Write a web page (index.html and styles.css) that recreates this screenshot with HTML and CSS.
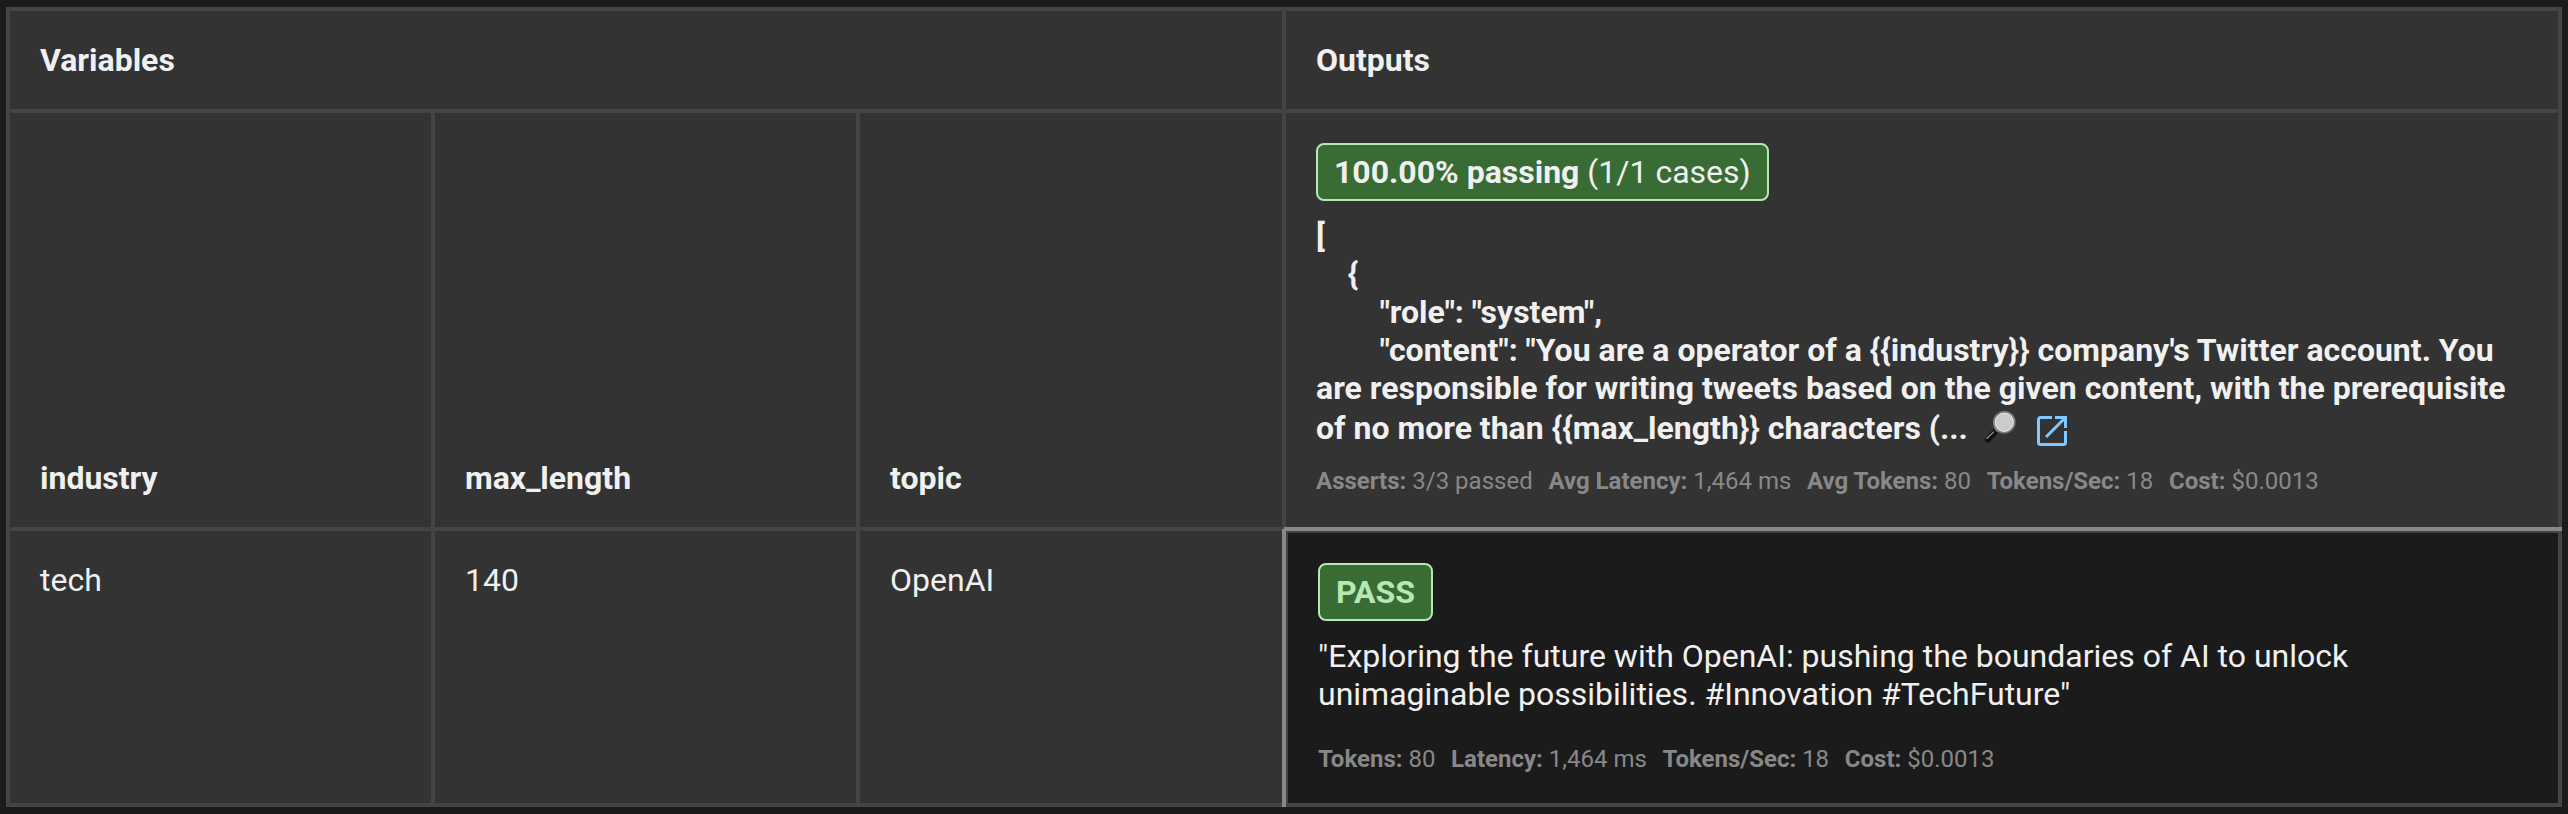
FILE: index.html
```
<!DOCTYPE html>
<html lang="en">
<head>
<meta charset="utf-8">
<title>Evaluation results</title>
<link rel="stylesheet" href="styles.css">
</head>
<body>
<main class="results">
  <div class="cell group-heading variables-heading">Variables</div>
  <div class="cell group-heading">Outputs</div>
  <div class="cell column-heading">industry</div>
  <div class="cell column-heading">max_length</div>
  <div class="cell column-heading">topic</div>
  <div class="cell prompt-heading">
    <div class="badge"><strong>100.00% passing</strong> (1/1 cases)</div>
    <div class="prompt">[
    {
        "role": "system",
        "content": "You are a operator of a {{industry}} company's Twitter account. You
are responsible for writing tweets based on the given content, with the prerequisite<div class="prompt-end">of no more than {{max_length}} characters (...<svg class="lens" viewBox="0 0 32 34"><defs><linearGradient id="rim" x1="0" y1="0" x2="1" y2="1"><stop offset="0" stop-color="#777"/><stop offset=".5" stop-color="#8a8a8a"/><stop offset="1" stop-color="#5c626b"/></linearGradient></defs><path d="M14 20 10 24" stroke="#999" stroke-width="3"/><path d="M10 24 4 30.500" stroke="#0c0f13" stroke-width="6" stroke-linecap="round"/><path d="M9.500 23 2.800 29.500" stroke="#7b858f" stroke-width="1.600" stroke-linecap="round"/><circle cx="20.300" cy="13.300" r="10.400" fill="#cbcbcb" stroke="url(#rim)" stroke-width="2"/><circle cx="20.300" cy="13.300" r="9.100" fill="none" stroke="#e8e8e8" stroke-width="1"/></svg><svg class="open" viewBox="0 0 30 30"><path d="M15 1.500H3.500a2 2 0 0 0-2 2v23a2 2 0 0 0 2 2h23a2 2 0 0 0 2-2V15M18 1.500h10.500V12M28 2 9 21" fill="none" stroke="#80c8ff" stroke-width="3"/></svg></div></div>
    <div class="stats"><span><b>Asserts:</b> 3/3 passed</span><span><b>Avg Latency:</b> 1,464 ms</span><span><b>Avg Tokens:</b> 80</span><span><b>Tokens/Sec:</b> 18</span><span><b>Cost:</b> $0.0013</span></div>
  </div>
  <div class="cell">tech</div>
  <div class="cell">140</div>
  <div class="cell">OpenAI</div>
  <div class="cell output">
    <div class="badge pass">PASS</div>
    <div class="answer">"Exploring the future with OpenAI: pushing the boundaries of AI to unlock
unimaginable possibilities. #Innovation #TechFuture"</div>
    <div class="stats"><span><b>Tokens:</b> 80</span><span><b>Latency:</b> 1,464 ms</span><span><b>Tokens/Sec:</b> 18</span><span><b>Cost:</b> $0.0013</span></div>
  </div>
</main>
</body>
</html>
```

FILE: styles.css
```
* { box-sizing: border-box; }
body {
  margin: 0;
  padding: 7px 6px;
  background: #1b1b1b;
  color: #f0f0f0;
  font: 32px/38px Roboto, sans-serif;
}
.results {
  display: grid;
  grid-template-columns: 421px 421px 422px 1272px;
  grid-template-rows: 98px 414px 272px;
  gap: 4px;
  padding: 4px;
  background: #444;
}
.cell { padding: 30px; background: #333; }
.variables-heading { grid-column: span 3; }
.group-heading, .column-heading, .prompt { font-weight: 700; }
.column-heading { display: flex; align-items: flex-end; }
.badge {
  width: fit-content;
  height: 58px;
  padding: 8px 16px;
  border: 2px solid #b7e8b4;
  border-radius: 8px;
  background: #386c34;
}
.pass { color: #b7e8b4; font-weight: 700; }
.prompt, .answer { white-space: pre; }
.prompt { height: 232px; margin-top: 16px; }
.prompt-end { margin-top: 2px; }
.answer { margin-top: 16px; }
.stats {
  display: flex;
  gap: 15.7px;
  color: #888;
  font-size: 24px;
  line-height: 28px;
}
.prompt-heading .stats { margin-top: 18px; }
.lens { width: 32px; height: 34px; margin-left: 16px; vertical-align: -4px; }
.open { width: 30px; height: 30px; margin-left: 21px; vertical-align: -7px; }
.output {
  position: relative;
  padding: 32px;
  background: #1b1b1b;
  box-shadow: inset 2px 2px #444;
}
.output::before, .output::after { content: ""; position: absolute; background: #888; }
.output::before { top: -4px; left: -2px; right: -4px; height: 4px; }
.output::after { top: -2px; left: -4px; bottom: -4px; width: 4px; }
.output .stats { margin-top: 32px; }
```
